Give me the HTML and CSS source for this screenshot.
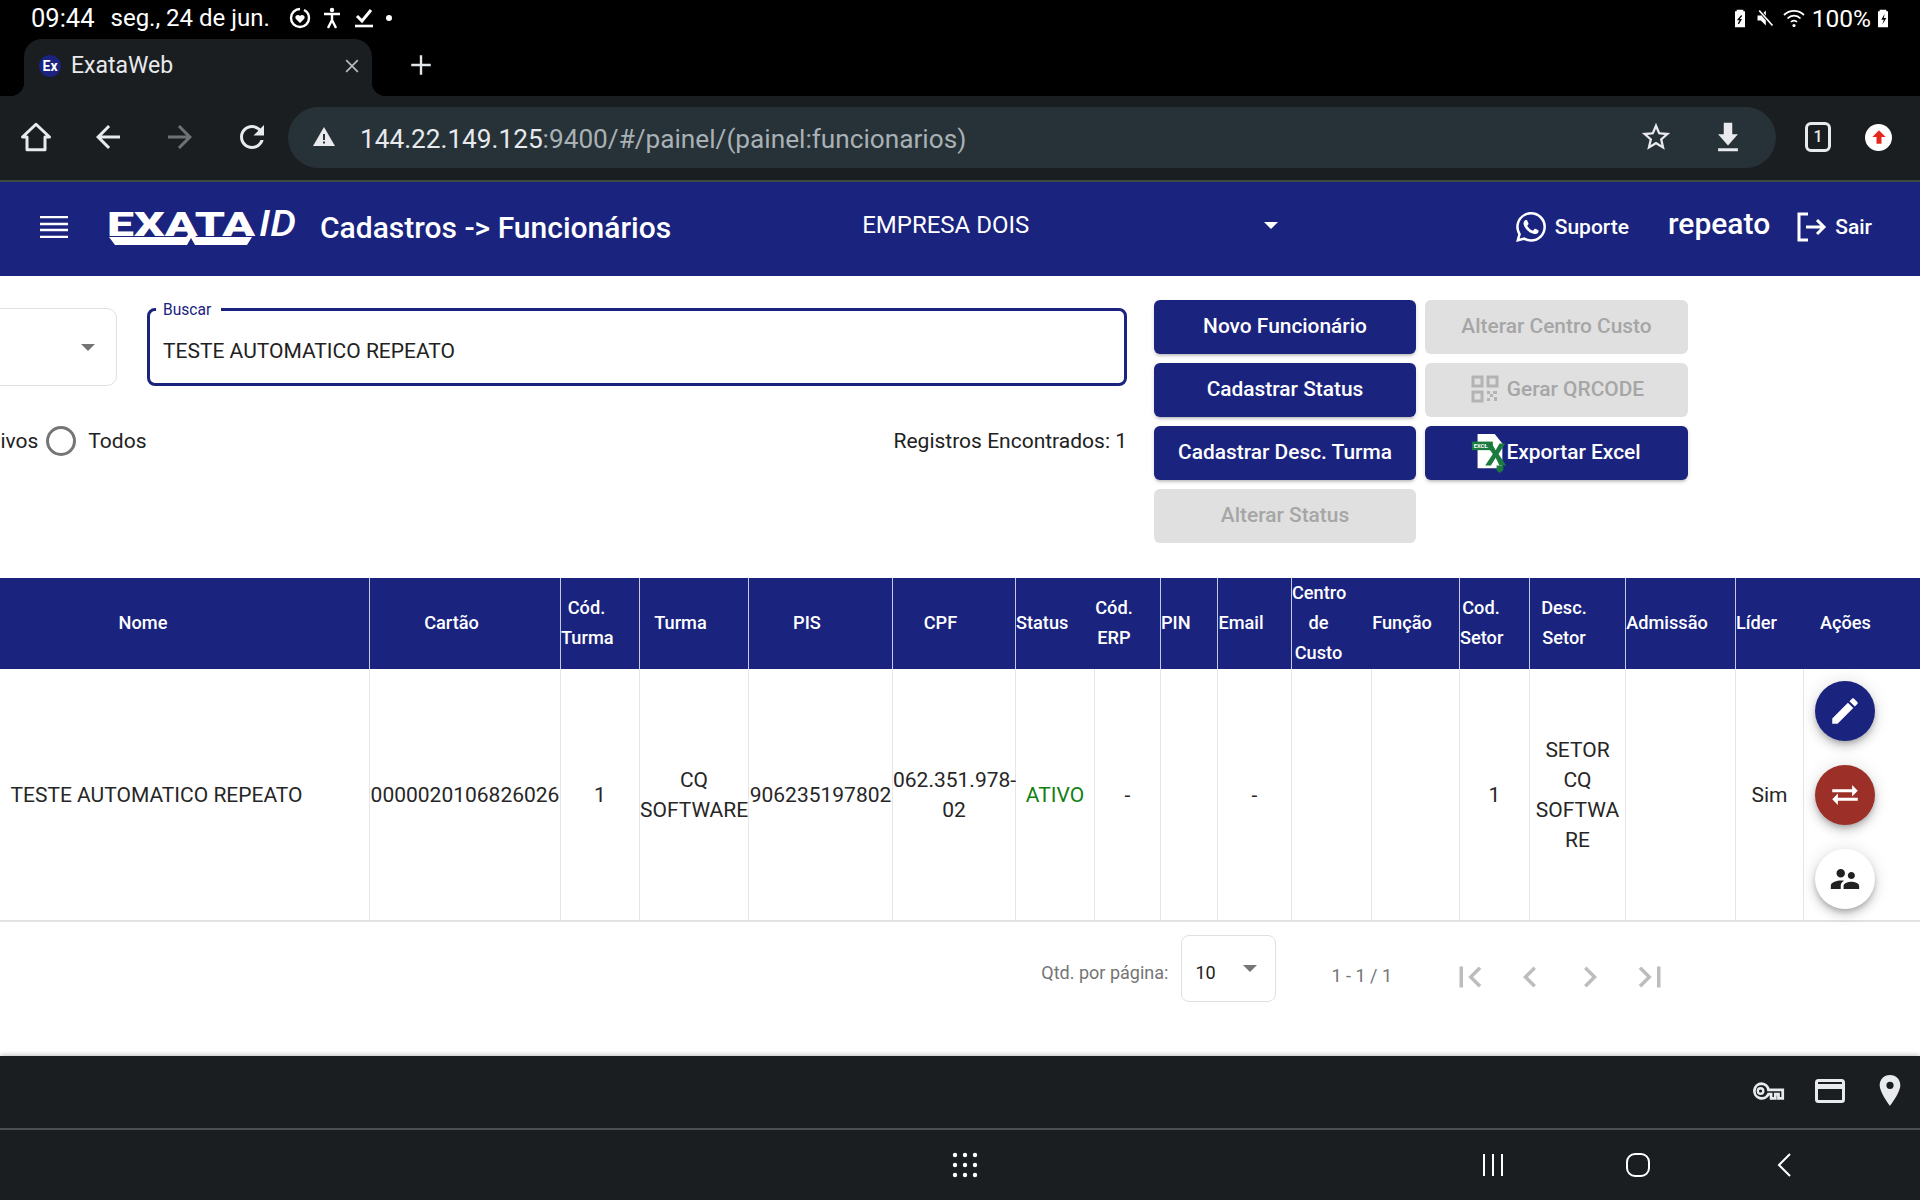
FILE: index.html
```html
<!DOCTYPE html>
<html lang="pt-BR">
  <head>
    <meta charset="UTF-8" />
    <title>ExataWeb</title>
    <link rel="stylesheet" href="styles.css">
  </head>
  <body>
    <div class="status-bar">
      <div class="status-left">
        <span class="clock">09:44</span>
        <span class="date">seg., 24 de jun.</span>
        <svg class="st-icon" viewBox="0 0 24 24"><path d="M12 3a9 9 0 1 0 9 9" fill="none" stroke="#fff" stroke-width="2.4"/><path d="M21 12a9 9 0 0 0-5-8" fill="none" stroke="#fff" stroke-width="2.4"/><path d="M12 17l-4.500-4.500a2.600 2.600 0 0 1 4.500-2.500 2.600 2.600 0 0 1 4.500 2.500z" fill="#fff"/></svg>
        <svg class="st-icon" viewBox="0 0 24 24"><circle cx="12" cy="4" r="2.200" fill="#fff"/><path d="M4 8h16M12 8v6M12 14l-4 8M12 14l4 8" fill="none" stroke="#fff" stroke-width="2.400"/></svg>
        <svg class="st-icon" viewBox="0 0 24 24"><path d="M5 10l5 5 9-11" fill="none" stroke="#fff" stroke-width="3"/><path d="M3 20h18" stroke="#fff" stroke-width="2.600"/></svg>
        <span class="st-dot"></span>
      </div>
      <div class="status-right">
        <svg class="st-icon small" viewBox="0 0 24 24"><path d="M8 2h8v2h2v19H6V4h2z" fill="#fff"/><path d="M14 9l-4 5h3l-3 5" fill="none" stroke="#000" stroke-width="1.600"/></svg>
        <svg class="st-icon small" viewBox="0 0 24 24"><path d="M3 9v6h4l6 6V3L7 9z" fill="#fff"/><path d="M5 3l16 18" stroke="#000" stroke-width="4"/><path d="M5 3l16 18" stroke="#fff" stroke-width="2"/></svg>
        <svg class="st-icon wifi" viewBox="0 0 24 24"><g fill="none" stroke="#fff" stroke-width="1.800"><path d="M2 9a14 14 0 0 1 20 0"/><path d="M5.500 12.500a9 9 0 0 1 13 0"/><path d="M9 16a4 4 0 0 1 6 0"/></g><circle cx="12" cy="19.500" r="1.600" fill="#fff"/></svg>
        <span class="battery-text">100%</span>
        <svg class="st-icon small" viewBox="0 0 24 24"><path d="M8 2h8v2h2v19H6V4h2z" fill="#fff"/><path d="M14 7l-4 7h3l-2 6 5-8h-3z" fill="#000"/></svg>
      </div>
    </div>

    <div class="tab-strip">
      <div class="tab">
        <span class="favicon">Ex</span>
        <span class="tab-title">ExataWeb</span>
        <svg class="tab-close" viewBox="0 0 24 24"><path d="M5 5l14 14M19 5L5 19" stroke="#b8bcbf" stroke-width="2"/></svg>
      </div>
      <svg class="tab-new" viewBox="0 0 24 24"><path d="M12 3v18M3 12h18" stroke="#e4e7e9" stroke-width="2.200"/></svg>
    </div>

    <div class="toolbar">
      <svg class="tool-icon" viewBox="0 0 24 24"><path d="M12 3.500L3 12h3v8.500h12V12h3z" fill="none" stroke="#e8eaed" stroke-width="2" stroke-linejoin="round"/></svg>
      <svg class="tool-icon" viewBox="0 0 24 24"><path fill="#e8eaed" d="M20 11H7.830l5.590-5.590L12 4l-8 8 8 8 1.410-1.410L7.830 13H20v-2z"/></svg>
      <svg class="tool-icon" viewBox="0 0 24 24"><path fill="#6e7275" d="M12 4l-1.410 1.410L16.170 11H4v2h12.170l-5.580 5.590L12 20l8-8z"/></svg>
      <svg class="tool-icon" viewBox="0 0 24 24"><path fill="#e8eaed" d="M17.650 6.350C16.200 4.900 14.210 4 12 4c-4.420 0-7.990 3.580-7.990 8s3.570 8 7.990 8c3.730 0 6.840-2.550 7.730-6h-2.080c-.82 2.330-3.040 4-5.650 4-3.310 0-6-2.690-6-6s2.690-6 6-6c1.660 0 3.140.69 4.220 1.780L13 11h7V4l-2.350 2.350z"/></svg>
      <div class="address">
        <svg class="addr-warn" viewBox="0 0 24 24"><path fill="#e8eaed" d="M1 21h22L12 2z"/><path d="M12 9v6M12 16.500v2" stroke="#263238" stroke-width="2"/></svg>
        <span class="url"><span class="url-host">144.22.149.125</span>:9400/#/painel/(painel:funcionarios)</span>
        <svg class="addr-icon star" viewBox="0 0 24 24"><path fill="#e8eaed" d="M22 9.240l-7.190-.62L12 2 9.190 8.630 2 9.240l5.460 4.730L5.820 21 12 17.270 18.180 21l-1.630-7.030L22 9.240zM12 15.400l-3.760 2.270 1-4.280-3.320-2.880 4.380-.38L12 6.100l1.710 4.040 4.380.38-3.320 2.880 1 4.280L12 15.400z"/></svg>
        <svg class="addr-icon" viewBox="0 0 24 24"><path fill="#e8eaed" d="M19 10h-4V2H9v8H5l7 8zM5 20v2h14v-2z"/></svg>
      </div>
      <span class="tab-count">1</span>
      <span class="update-badge"><svg viewBox="0 0 24 24"><path fill="#e5281e" d="M12 4l-8 8h5v8h6v-8h5z"/></svg></span>
    </div>

    <header class="app-header">
      <svg class="menu-icon" viewBox="0 0 28 22"><path d="M0 1h28M0 8h28M0 14h28M0 21h28" stroke="#fff" stroke-width="2.600"/></svg>
      <svg class="logo" viewBox="0 0 190 38">
        <text x="0" y="28" class="logo-word" textLength="148" lengthAdjust="spacingAndGlyphs">EXATA</text>
        <text x="152" y="28" class="logo-id" textLength="37" lengthAdjust="spacingAndGlyphs">ID</text>
        <path d="M2 29h77l5-6 5 6h56l-5 8H88l-4-7-4 7H8z" fill="#fff"/>
      </svg>
      <h1 class="page-title">Cadastros -&gt; Funcionários</h1>
      <div class="company">
        <span>EMPRESA DOIS</span>
        <span class="caret white"></span>
      </div>
      <div class="header-right">
        <svg class="whats" viewBox="0 0 24 24"><path fill="#fff" d="M17.472 14.382c-.297-.149-1.758-.867-2.030-.967-.273-.099-.471-.148-.67.150-.197.297-.767.966-.94 1.164-.173.199-.347.223-.644.075-.297-.150-1.255-.463-2.390-1.475-.883-.788-1.480-1.761-1.653-2.059-.173-.297-.018-.458.130-.606.134-.133.298-.347.446-.520.149-.174.198-.298.298-.497.099-.198.050-.371-.025-.520-.075-.149-.669-1.612-.916-2.207-.242-.579-.487-.500-.669-.510-.173-.008-.371-.010-.570-.010-.198 0-.520.074-.792.372-.272.297-1.040 1.016-1.040 2.479 0 1.462 1.065 2.875 1.213 3.074.149.198 2.096 3.200 5.077 4.487.709.306 1.262.489 1.694.625.712.227 1.360.195 1.871.118.571-.085 1.758-.719 2.006-1.413.248-.694.248-1.289.173-1.413-.074-.124-.272-.198-.570-.347m-5.421 7.403h-.004a9.870 9.870 0 01-5.031-1.378l-.361-.214-3.741.982.998-3.648-.235-.374a9.860 9.860 0 01-1.510-5.260c.001-5.450 4.436-9.884 9.888-9.884 2.640 0 5.122 1.030 6.988 2.898a9.825 9.825 0 012.893 6.994c-.003 5.450-4.437 9.884-9.885 9.884m8.413-18.297A11.815 11.815 0 0012.050 0C5.495 0 .160 5.335.157 11.892c0 2.096.547 4.142 1.588 5.945L.057 24l6.305-1.654a11.882 11.882 0 005.683 1.448h.005c6.554 0 11.890-5.335 11.893-11.893a11.821 11.821 0 00-3.480-8.413z"/></svg>
        <span class="head-link">Suporte</span>
        <span class="user-name">repeato</span>
        <svg class="exit" viewBox="0 0 30 30"><path d="M11 2H2v26h9" fill="none" stroke="#fff" stroke-width="3"/><path d="M9 15h18M20 8l7 7-7 7" fill="none" stroke="#fff" stroke-width="3"/></svg>
        <span class="head-link">Sair</span>
      </div>
    </header>

    <main class="content">
      <section class="filters">
        <div class="filters-left">
          <div class="field-row">
            <div class="select-box"><span class="caret"></span></div>
            <div class="search-box">
              <span class="search-label">Buscar</span>
              <span class="search-value">TESTE AUTOMATICO REPEATO</span>
            </div>
          </div>
          <div class="radio-row">
            <span class="radio"></span>
            <span class="radio-text">Ativos</span>
            <span class="radio"></span>
            <span class="radio-text">Todos</span>
            <span class="found">Registros Encontrados: 1</span>
          </div>
        </div>
        <div class="actions-grid">
          <button class="btn">Novo Funcionário</button>
          <button class="btn off">Alterar Centro Custo</button>
          <button class="btn">Cadastrar Status</button>
          <button class="btn off">
            <svg class="btn-icon" viewBox="0 0 28 28"><path fill="none" stroke="#b3b3b3" stroke-width="3" d="M2 2h9v9H2zM17 2h9v9h-9zM2 17h9v9H2z"/><path fill="#b3b3b3" d="M16 16h3v3h-3zM22 16h4v3h-4zM19 19h3v3h-3zM16 23h3v3h-3zM23 22h3v4h-3z"/></svg>
            Gerar QRCODE
          </button>
          <button class="btn">Cadastrar Desc. Turma</button>
          <button class="btn">
            <svg class="excel-icon" viewBox="0 0 36 42"><path fill="#fff" d="M6 1h18l8 10v26H6z"/><path fill="#1b7a3d" d="M0 9h22v9H0z"/><text x="2" y="16" class="excel-text">EXCEL</text><path fill="#1b7a3d" d="M14 11h7l4 7 4-7h6l-7 11 8 12h-7l-4-8-5 8h-6l8-12z"/><path fill="#1b7a3d" d="M26 34h7v5l-4 3-3-3z"/></svg>
            Exportar Excel
          </button>
          <button class="btn off">Alterar Status</button>
        </div>
      </section>

      <section class="table-wrap">
        <table class="grid">
          <colgroup>
            <col class="c-nome"><col class="c-cartao"><col class="c-codturma"><col class="c-turma"><col class="c-pis"><col class="c-cpf"><col class="c-status"><col class="c-coderp"><col class="c-pin"><col class="c-email"><col class="c-centro"><col class="c-funcao"><col class="c-codsetor"><col class="c-descsetor"><col class="c-admissao"><col class="c-lider"><col class="c-acoes">
          </colgroup>
          <thead>
            <tr>
              <th>Nome</th>
              <th>Cartão</th>
              <th>Cód. Turma</th>
              <th>Turma</th>
              <th>PIS</th>
              <th>CPF</th>
              <th class="no-rule">Status</th>
              <th>Cód. ERP</th>
              <th>PIN</th>
              <th>Email</th>
              <th class="no-rule">Centro de Custo</th>
              <th>Função</th>
              <th>Cod. Setor</th>
              <th>Desc. Setor</th>
              <th>Admissão</th>
              <th class="no-rule">Líder</th>
              <th class="no-rule last">Ações</th>
            </tr>
          </thead>
          <tbody>
            <tr>
              <td>TESTE AUTOMATICO REPEATO</td>
              <td>0000020106826026</td>
              <td>1</td>
              <td class="tight">CQ SOFTWARE</td>
              <td>906235197802</td>
              <td class="tight">062.351.978-<br>02</td>
              <td class="ativo">ATIVO</td>
              <td>-</td>
              <td></td>
              <td>-</td>
              <td></td>
              <td></td>
              <td>1</td>
              <td>SETOR CQ SOFTWARE</td>
              <td></td>
              <td>Sim</td>
              <td>
                <div class="row-actions">
                  <button class="fab blue"><svg viewBox="0 0 24 24"><path fill="#fff" d="M3 17.250V21h3.750L17.810 9.940l-3.750-3.750L3 17.250zM20.710 7.040c.39-.39.39-1.020 0-1.410l-2.340-2.340c-.39-.39-1.020-.39-1.410 0l-1.830 1.830 3.750 3.750 1.830-1.830z"/></svg></button>
                  <button class="fab red"><svg viewBox="0 0 24 24"><path fill="#fff" d="M6.990 11L3 15l3.990 4v-3H21v-2H6.990v-3zM21 9l-3.990-4v3H3v2h14.010v3L21 9z"/></svg></button>
                  <button class="fab white"><svg viewBox="0 0 24 24"><path fill="#212121" d="M16.500 12c1.380 0 2.490-1.120 2.490-2.500S17.880 7 16.500 7C15.120 7 14 8.120 14 9.500s1.120 2.500 2.500 2.500zM9 11c1.660 0 2.990-1.340 2.990-3S10.660 5 9 5C7.340 5 6 6.340 6 8s1.340 3 3 3zm7.500 3c-1.830 0-5.500.92-5.500 2.750V19h11v-2.250c0-1.830-3.670-2.750-5.500-2.750zM9 13c-2.330 0-7 1.170-7 3.500V19h7v-2.250c0-.85.33-2.340 2.370-3.470C10.500 13.100 9.660 13 9 13z"/></svg></button>
                </div>
              </td>
            </tr>
          </tbody>
        </table>
      </section>

      <section class="paginator">
        <span class="page-label">Qtd. por página:</span>
        <div class="page-size"><span>10</span><span class="caret"></span></div>
        <span class="page-range">1 - 1 / 1</span>
        <div class="page-nav">
          <svg viewBox="0 0 24 24"><path d="M18.410 16.590L13.820 12l4.590-4.590L17 6l-6 6 6 6zM6 6h2v12H6z"/></svg>
          <svg viewBox="0 0 24 24"><path d="M15.410 7.410L14 6l-6 6 6 6 1.410-1.410L10.830 12z"/></svg>
          <svg viewBox="0 0 24 24"><path d="M10 6L8.590 7.410 13.170 12l-4.580 4.590L10 18l6-6z"/></svg>
          <svg viewBox="0 0 24 24"><path d="M5.590 7.410L10.180 12l-4.590 4.590L7 18l6-6-6-6zM16 6h2v12h-2z"/></svg>
        </div>
      </section>
    </main>

    <footer class="system-bar">
      <div class="keyboard-row">
        <svg class="sys-icon" viewBox="0 0 36 24"><path d="M11 5a7 7 0 1 0 6.500 10H20v4h4v-4h3v4h4v-8H17.500A7 7 0 0 0 11 5z" fill="none" stroke="#e8eaed" stroke-width="2.600"/><circle cx="10" cy="12" r="2.600" fill="none" stroke="#e8eaed" stroke-width="2.200"/></svg>
        <svg class="sys-icon" viewBox="0 0 30 24"><rect x="1.500" y="1.500" width="27" height="21" rx="2" fill="none" stroke="#e8eaed" stroke-width="3"/><path d="M2 7.500h26" stroke="#e8eaed" stroke-width="5"/></svg>
        <svg class="sys-icon pin" viewBox="0 0 24 32"><path fill-rule="evenodd" fill="#e8eaed" d="M12 1C6 1 2 5.500 2 11c0 7 10 20 10 20s10-13 10-20C22 5.500 18 1 12 1zm0 13.500a3.500 3.500 0 1 1 0-7 3.500 3.500 0 0 1 0 7z"/></svg>
      </div>
      <div class="nav-row">
        <svg class="nav-apps" viewBox="0 0 26 26"><g fill="#fff"><circle cx="3" cy="3" r="2.200"/><circle cx="13" cy="3" r="2.200"/><circle cx="23" cy="3" r="2.200"/><circle cx="3" cy="13" r="2.200"/><circle cx="13" cy="13" r="2.200"/><circle cx="23" cy="13" r="2.200"/><circle cx="3" cy="23" r="2.200"/><circle cx="13" cy="23" r="2.200"/><circle cx="23" cy="23" r="2.200"/></g></svg>
        <svg class="nav-icon recent" viewBox="0 0 24 24"><path d="M3 1v22M12 1v22M21 1v22" stroke="#fff" stroke-width="2"/></svg>
        <svg class="nav-icon home" viewBox="0 0 24 24"><rect x="1" y="1" width="22" height="22" rx="8" fill="none" stroke="#fff" stroke-width="2"/></svg>
        <svg class="nav-icon back" viewBox="0 0 24 24"><path d="M17 1L6 12l11 11" fill="none" stroke="#fff" stroke-width="2"/></svg>
      </div>
    </footer>
  </body>
</html>
```

FILE: styles.css
```css
* {
  margin: 0;
  padding: 0;
  box-sizing: border-box;
}

html,
body {
  width: 1920px;
  height: 1200px;
  overflow: hidden;
  font-family: Roboto, "Liberation Sans", sans-serif;
  background-color: #000;
}

body {
  display: flex;
  flex-direction: column;
}

svg {
  display: block;
  flex-shrink: 0;
}

/* android status bar */
.status-bar {
  height: 39px;
  display: flex;
  justify-content: space-between;
  align-items: center;
  padding: 0 27px 3px 31px;
  color: #fff;
  font-size: 24px;
}

.status-left,
.status-right {
  display: flex;
  align-items: center;
}

.clock {
  font-size: 25.500px;
}

.date {
  margin-left: 16px;
  margin-right: 18px;
}

.battery-text {
  font-size: 24.500px;
}

.st-icon {
  width: 24px;
  height: 24px;
  margin-right: 8px;
}

.st-dot {
  width: 6px;
  height: 6px;
  border-radius: 50%;
  background-color: #fff;
  margin-left: 2px;
}

.st-icon.small {
  width: 20px;
  height: 20px;
  margin-right: 5px;
}

.st-icon.wifi {
  width: 24px;
  height: 24px;
  margin-left: 2px;
  margin-right: 6px;
}

.status-right .st-icon:last-child {
  margin-right: 0;
  margin-left: 2px;
}

/* chrome tabs */
.tab-strip {
  height: 57px;
  display: flex;
  align-items: stretch;
}

.tab {
  position: relative;
  width: 348px;
  margin-left: 24px;
  border-radius: 18px 18px 0 0;
  background-color: #1a1e21;
  display: flex;
  align-items: center;
  padding: 0 10px 4px 15px;
  color: #e8eaed;
  font-size: 23px;
}

.tab::before,
.tab::after {
  content: "";
  position: absolute;
  bottom: 0;
  width: 14px;
  height: 14px;
}

.tab::before {
  left: -14px;
  background: radial-gradient(circle at 0 0, transparent 14px, #1a1e21 14.500px);
}

.tab::after {
  right: -14px;
  background: radial-gradient(circle at 100% 0, transparent 14px, #1a1e21 14.500px);
}

.favicon {
  width: 22px;
  height: 22px;
  border-radius: 50%;
  background-color: #1a237e;
  color: #fff;
  font-size: 14px;
  font-weight: 700;
  text-align: center;
  line-height: 22px;
}

.tab-title {
  margin-left: 10px;
}

.tab-close {
  width: 20px;
  height: 20px;
  margin-left: auto;
  margin-right: 0;
}

.tab-new {
  width: 26px;
  height: 26px;
  margin-left: 36px;
  align-self: center;
  margin-bottom: 6px;
}

.toolbar {
  height: 86px;
  background-color: #1a1e21;
  border-bottom: 2px solid #3c4a40;
  display: flex;
  align-items: center;
  padding-left: 18px;
  padding-bottom: 2px;
}

.tool-icon {
  width: 36px;
  height: 36px;
  margin-right: 36px;
}

.address {
  width: 1488px;
  height: 61px;
  margin-left: -18px;
  border-radius: 31px;
  background-color: #263238;
  display: flex;
  align-items: center;
  padding-left: 24px;
  padding-right: 31px;
}

.addr-warn {
  width: 24px;
  height: 24px;
}

.url {
  margin-left: 24px;
  margin-top: 4px;
  font-size: 26.200px;
  color: #a9b1b5;
  flex: 1;
}

.url-host {
  color: #e8eaed;
}

.addr-icon {
  width: 34px;
  height: 34px;
}

.addr-icon.star {
  margin-right: 38px;
}

.tab-count {
  width: 26px;
  height: 30px;
  margin-left: 29px;
  border: 3px solid #e8eaed;
  border-radius: 6px;
  color: #e8eaed;
  font-size: 16px;
  font-weight: 500;
  text-align: center;
  line-height: 24px;
}

.update-badge {
  width: 27px;
  height: 27px;
  margin-left: 34px;
  border-radius: 50%;
  background-color: #fff;
  display: flex;
  align-items: center;
  justify-content: center;
}

.update-badge svg {
  width: 20px;
  height: 20px;
}

/* app header */
.app-header {
  height: 94px;
  background-color: #1a237e;
  display: flex;
  align-items: center;
  color: #fff;
  padding: 0 48px 4px 40px;
}

.menu-icon {
  width: 28px;
  height: 22px;
}

.logo {
  width: 190px;
  height: 38px;
  margin-left: 39px;
  overflow: visible;
}

.logo-word {
  font-family: Roboto, sans-serif;
  font-size: 34px;
  font-weight: 900;
  fill: #fff;
}

.logo-id {
  font-family: Roboto, sans-serif;
  font-size: 37px;
  font-style: italic;
  font-weight: 500;
  fill: #fff;
}

.page-title {
  margin-left: 23px;
  font-size: 30px;
  font-weight: 500;
}

.company {
  width: 418px;
  margin-left: 191px;
  display: flex;
  align-items: center;
  justify-content: space-between;
  font-size: 24px;
  padding-right: 2px;
  margin-bottom: 4px;
}

.caret {
  width: 0;
  height: 0;
  border-left: 7px solid transparent;
  border-right: 7px solid transparent;
  border-top: 7px solid #757575;
}

.caret.white {
  border-top-color: #fff;
}

.header-right {
  margin-left: auto;
  display: flex;
  align-items: center;
}

.whats {
  width: 30px;
  height: 30px;
  margin-right: 9px;
}

.head-link {
  font-size: 21px;
  font-weight: 500;
}

.user-name {
  margin-left: 39px;
  font-size: 30px;
  font-weight: 500;
  margin-bottom: 7px;
}

.exit {
  width: 30px;
  height: 30px;
  margin-left: 27px;
  margin-right: 8px;
}

/* page content, scrolled a bit to the right */
.content {
  flex: 1;
  background-color: #fff;
  overflow: hidden;
  color: #212121;
}

.filters {
  height: 302px;
  margin-left: -57px;
  display: flex;
  padding-top: 24px;
}

.filters-left {
  width: 1184px;
  padding-top: 8px;
}

.field-row {
  display: flex;
  gap: 30px;
  height: 78px;
}

.select-box {
  width: 174px;
  border: 1px solid #e0e0e0;
  border-radius: 10px;
  display: flex;
  align-items: center;
  justify-content: flex-end;
  padding-right: 21px;
}

.search-box {
  flex: 1;
  position: relative;
  border: 3px solid #1a237e;
  border-radius: 8px;
  padding: 28px 13px 0;
}

.search-label {
  position: absolute;
  top: -10px;
  left: 6px;
  padding: 0 10px 0 7px;
  background-color: #fff;
  color: #1a237e;
  font-size: 15.600px;
  line-height: 18px;
}

.search-value,
.radio-text,
.found {
  font-size: 21px;
}

.radio-row {
  margin-top: 40px;
  display: flex;
  align-items: center;
}

.radio {
  width: 30px;
  height: 30px;
  border: 3px solid #757575;
  border-radius: 50%;
}

.radio-text {
  margin-left: 12px;
  margin-right: 8px;
}

.radio-row .radio:first-child {
  margin-left: -5px;
}

.found {
  margin-left: auto;
}

.actions-grid {
  margin-left: 27px;
  display: grid;
  grid-template-columns: 262px 263px;
  grid-auto-rows: 54px;
  gap: 9px;
}

.btn {
  display: flex;
  align-items: center;
  justify-content: center;
  border: none;
  border-radius: 6px;
  background-color: #1a237e;
  color: #fff;
  font-family: inherit;
  font-size: 20.900px;
  font-weight: 500;
  padding-bottom: 2px;
  box-shadow: 0 3px 3px -2px rgba(0, 0, 0, .2), 0 2px 4px 0 rgba(0, 0, 0, .14);
}

.btn.off {
  background-color: #e0e0e0;
  color: #a6a6a6;
  box-shadow: none;
}

.btn-icon {
  width: 28px;
  height: 28px;
  margin-right: 8px;
  margin-left: 2px;
}

.excel-icon {
  width: 38px;
  height: 40px;
  margin-right: -2px;
  margin-left: -2px;
  margin-top: 2px;
}

.excel-text {
  font-family: Roboto, sans-serif;
  font-size: 6px;
  font-weight: 700;
  fill: #fff;
}

/* table */
.table-wrap {
  margin-left: -56px;
}

.grid {
  width: 1977px;
  table-layout: fixed;
  border-collapse: separate;
  border-spacing: 0;
}

.c-nome { width: 426px; }
.c-cartao { width: 191px; }
.c-codturma { width: 79px; }
.c-turma { width: 109px; }
.c-pis { width: 144px; }
.c-cpf { width: 123px; }
.c-status { width: 79px; }
.c-coderp { width: 66px; }
.c-pin { width: 57px; }
.c-email { width: 74px; }
.c-centro { width: 80px; }
.c-funcao { width: 88px; }
.c-codsetor { width: 70px; }
.c-descsetor { width: 96px; }
.c-admissao { width: 110px; }
.c-lider { width: 68px; }
.c-acoes { width: 117px; }

.grid th {
  height: 91px;
  padding-right: 27px;
  padding-bottom: 1px;
  background-color: #1a237e;
  color: #fff;
  border-right: 1px solid #c5c8e0;
  font-size: 18.200px;
  font-weight: 500;
  line-height: 30px;
  text-align: center;
}

.grid th.no-rule {
  border-right: none;
}

.grid th.last {
  padding-right: 34px;
}

.grid td {
  height: 253px;
  border-right: 1px solid #e6e6e6;
  border-bottom: 2px solid #e2e2e2;
  font-size: 21px;
  line-height: 30px;
  text-align: center;
  overflow-wrap: break-word;
  color: #262626;
}

.grid td.tight {
  overflow-wrap: normal;
}

.grid td:last-child {
  border-right: none;
}

.grid td.ativo {
  color: #118011;
}

.row-actions {
  display: flex;
  flex-direction: column;
  align-items: center;
  gap: 24px;
  padding-right: 35px;
  padding-top: 1px;
}

.fab {
  width: 60px;
  height: 60px;
  border: none;
  border-radius: 50%;
  display: flex;
  align-items: center;
  justify-content: center;
  box-shadow: 0 3px 5px -1px rgba(0, 0, 0, .2), 0 6px 10px 0 rgba(0, 0, 0, .14), 0 1px 18px 0 rgba(0, 0, 0, .12);
}

.fab svg {
  width: 34px;
  height: 34px;
}

.fab.blue { background-color: #1a237e; }
.fab.red { background-color: #9c3028; }
.fab.white { background-color: #fff; }

/* paginator */
.paginator {
  height: 135px;
  display: flex;
  justify-content: flex-end;
  padding-right: 240px;
  padding-top: 13px;
  color: #757575;
  font-size: 18px;
}

.page-label {
  margin-top: 27px;
  font-size: 18px;
}

.page-size {
  width: 95px;
  height: 67px;
  margin-left: 13px;
  border: 1px solid #e0e0e0;
  border-radius: 8px;
  display: flex;
  justify-content: space-between;
  padding: 26px 18px 0 13px;
  color: #212121;
}

.page-size .caret {
  margin-top: 3px;
}

.page-range {
  margin-left: 55px;
  margin-top: 30px;
}

.page-nav {
  margin-left: 48px;
  margin-top: 21px;
  display: flex;
}

.page-nav svg {
  width: 60px;
  height: 42px;
  fill: #bdbdbd;
}

/* bottom bars */
.system-bar {
  height: 144px;
  background-color: #1a1e21;
  box-shadow: 0 -1px 5px rgba(0, 0, 0, .25);
}

.keyboard-row {
  height: 74px;
  border-bottom: 2px solid #4a4e51;
  display: flex;
  justify-content: flex-end;
  align-items: center;
  padding-right: 17px;
  padding-bottom: 3px;
}

.sys-icon {
  width: 38px;
  height: 26px;
  margin-right: 27px;
}

.sys-icon:nth-child(2) {
  width: 30px;
  height: 30px;
  margin-right: 32px;
}

.sys-icon.pin {
  width: 26px;
  height: 33px;
  margin-right: 0;
}

.nav-row {
  height: 70px;
  display: flex;
  align-items: center;
  padding-left: 952px;
}

.nav-apps {
  width: 26px;
  height: 26px;
}

.nav-icon {
  width: 24px;
  height: 24px;
}

.recent {
  margin-left: 503px;
}

.home {
  margin-left: 121px;
}

.back {
  margin-left: 123px;
}
```
